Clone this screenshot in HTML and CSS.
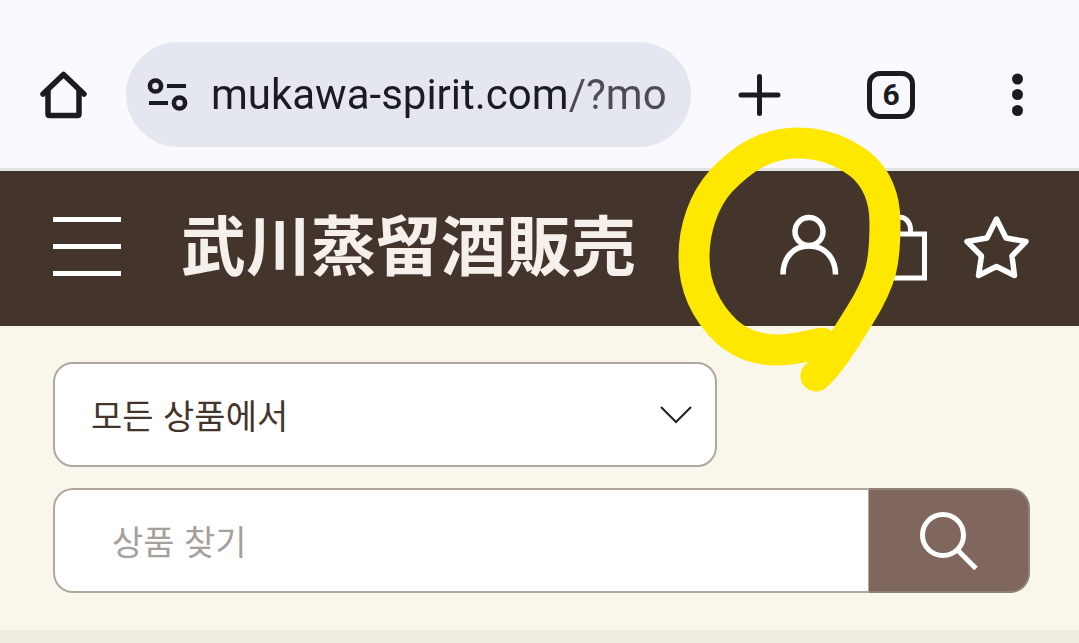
FILE: index.html
```html
<!DOCTYPE html>
<html lang="ko">
<head>
	<meta charset="UTF-8">
	<meta name="viewport" content="width=device-width, initial-scale=1">
	<title>武川蒸留酒販売</title>
	<link rel="stylesheet" href="styles.css">
</head>
<body>
	<div class="toolbar">
		<button class="toolButton" type="button" aria-label="Home">
			<svg width="48" height="48" viewBox="0 0 48 48" fill="none" stroke="#1b1b20" stroke-width="5.500" stroke-linecap="round" stroke-linejoin="round">
				<path d="M3 23 L23.500 3.500 L44 23"/>
				<path d="M8 20 V43 Q8 44.500 9.500 44.500 H37.500 Q39 44.500 39 43 V20"/>
			</svg>
		</button>
		<div class="addressBar">
			<svg width="42" height="36" viewBox="0 0 42 36" fill="none" stroke="#1b1b20" stroke-width="4.500">
				<circle cx="8.500" cy="9" r="5.600"/>
				<path d="M20 9 H39 M2 26 H21" stroke-width="4"/>
				<circle cx="32.500" cy="26" r="5.600"/>
			</svg>
			<input class="url" type="text" aria-label="URL" value="mukawa-spirit.com/?mo">
		</div>
		<div class="toolActions">
			<button class="toolButton" type="button" aria-label="New tab">
				<svg width="48" height="48" viewBox="0 0 48 48" stroke="#1b1b20" stroke-width="5" stroke-linecap="round">
					<path d="M24.500 5.500 V42.500 M6 24 H43"/>
				</svg>
			</button>
			<button class="toolButton tabCount" type="button">6</button>
			<button class="toolButton" type="button" aria-label="Menu">
				<svg width="36" height="48" viewBox="0 0 36 48" fill="#1b1b20">
					<circle cx="18.500" cy="8" r="5.500"/>
					<circle cx="18.500" cy="23.500" r="5.500"/>
					<circle cx="18.500" cy="39.500" r="5.500"/>
				</svg>
			</button>
		</div>
	</div>

	<header class="header">
		<button class="menuButton" type="button" aria-label="메뉴">
			<span class="bar"></span>
			<span class="bar"></span>
			<span class="bar"></span>
		</button>
		<a class="logo" href="#" lang="ja">武川蒸留酒販売</a>
		<nav class="headerIcons">
			<a class="iconLink" href="#" aria-label="마이페이지">
				<svg width="59" height="68" viewBox="0 0 59 68" fill="none" stroke="#fff" stroke-width="5.500">
					<circle cx="29" cy="18.500" r="14"/>
					<path d="M3 61.500 C3 45 13 33 29 33 C45 33 55.500 45 55.500 61.500"/>
				</svg>
				<!-- hand-drawn marker round the account icon -->
				<svg class="marker" width="232" height="272" viewBox="674 123 232 272" fill="none" stroke="#ffe800" stroke-width="31" stroke-linecap="round" stroke-linejoin="round">
					<path d="M822 343 C808 346 794 350 777 350 C757 350 741 344 727 332 C706 312 694 287 694 257 C694 228 704 200 721 181 C742 159 765 143 798 143 C825 143 843 152 860 164 C877 178 885 199 885 223 C885 262 882 280 860 315 C843 342 830 364 816 376"/>
				</svg>
			</a>
			<a class="iconLink" href="#" aria-label="장바구니">
				<svg width="68" height="68" viewBox="0 0 68 68" fill="none" stroke="#fff" stroke-width="5">
					<path d="M9 21 H57.500 V65 H9 Z"/>
					<path d="M22.500 21 V17 C22.500 0 43.500 0 43.500 17 V21"/>
				</svg>
			</a>
			<a class="iconLink" href="#" aria-label="즐겨찾기">
				<svg width="66" height="68" viewBox="0 0 66 68" fill="none" stroke="#fff" stroke-width="5.500" stroke-linejoin="round">
					<path d="M33.500 6 L43 25 L63 28.500 L49 43 L51.500 62.500 L33.500 53.500 L15.500 62.500 L18.500 43 L4 28.500 L24 25 Z"/>
				</svg>
			</a>
		</nav>
	</header>

	<form class="searchForm">
		<div class="selectBox">
			<select class="category" aria-label="카테고리">
				<option>모든 상품에서</option>
			</select>
			<svg class="chevron" width="34" height="18" viewBox="0 0 34 18" fill="none" stroke="#222" stroke-width="2">
				<path d="M2 1 L17 16 L32 1"/>
			</svg>
		</div>
		<div class="searchRow">
			<input class="keyword" type="text" aria-label="상품 찾기" placeholder="상품 찾기">
			<button class="searchButton" type="submit" aria-label="검색">
				<svg width="58" height="58" viewBox="0 0 58 58" fill="none" stroke="#fff" stroke-width="5">
					<circle cx="23" cy="23" r="20.500"/>
					<path d="M37.500 38 L56 56.500"/>
				</svg>
			</button>
		</div>
	</form>
	<main class="content"></main>
</body>
</html>
```

FILE: styles.css
```css
* {
	margin: 0;
	padding: 0;
	box-sizing: border-box;
}

body {
	display: flex;
	flex-direction: column;
	min-height: 100vh;
	background-color: #f9f6ec;
	color: #43342c;
	font-family: "Noto Sans CJK KR", sans-serif;
	font-size: 34px;
}

button {
	border: none;
	background: none;
	cursor: pointer;
}

svg {
	display: block;
}

/* browser toolbar */
.toolbar {
	display: flex;
	align-items: center;
	gap: 38px;
	padding: 42px 44px 21px 40px;
	border-bottom: 3px solid #e2e3e6;
	background-color: #faf9ff;
}

.addressBar {
	flex: 1;
	display: flex;
	align-items: center;
	gap: 22px;
	min-width: 0;
	height: 105px;
	padding: 0 20px 0 21px;
	border-radius: 53px;
	background-color: #e4e7f0;
}

.addressBar svg {
	flex-shrink: 0;
}

/* the path after the host is drawn in a lighter grey */
.url {
	flex: 1;
	min-width: 0;
	height: 64px;
	border: none;
	outline: none;
	color: #1b1b20;
	font-family: Roboto, sans-serif;
	font-size: 42px;
	background: linear-gradient(90deg, #1b1b20 356px, #4b4c57 358px);
	-webkit-background-clip: text;
	background-clip: text;
	-webkit-text-fill-color: transparent;
}

.toolActions {
	display: flex;
	align-items: center;
	gap: 84px;
	padding-left: 6px;
}

.tabCount {
	width: 48px;
	height: 48px;
	border: 5px solid #1b1b20;
	border-radius: 13px;
	color: #1b1b20;
	font-family: Roboto, sans-serif;
	font-size: 30px;
	font-weight: bold;
	line-height: 36px;
}

/* shop header */
.header {
	display: flex;
	align-items: center;
	gap: 60px;
	height: 155px;
	padding: 0 50px 4px 53px;
	background-color: #43342c;
}

.menuButton {
	display: flex;
	flex-direction: column;
	gap: 22px;
	width: 68px;
}

.bar {
	height: 5px;
	background-color: #fff;
}

.logo {
	padding-bottom: 10px;
	color: #f5f0ec;
	font-family: "Noto Sans CJK JP", sans-serif;
	font-size: 65px;
	font-weight: bold;
	line-height: 72px;
	white-space: nowrap;
	text-decoration: none;
}

.headerIcons {
	display: flex;
	gap: 28px;
	margin-left: auto;
}

.iconLink {
	position: relative;
}

.marker {
	position: absolute;
	top: -90px;
	left: -106px;
	z-index: 1;
	pointer-events: none;
}

/* product search */
.searchForm {
	display: flex;
	flex-direction: column;
	gap: 21px;
	padding: 36px 49px 37px 53px;
}

.selectBox {
	position: relative;
	width: 68%;
}

.category {
	width: 100%;
	height: 105px;
	padding: 0 80px 0 36px;
	border: 2px solid #b0a79e;
	border-radius: 20px;
	background-color: #fff;
	color: #43342c;
	font: inherit;
	appearance: none;
}

.chevron {
	position: absolute;
	top: 44px;
	right: 24px;
	pointer-events: none;
}

.searchRow {
	display: flex;
	height: 105px;
}

.keyword {
	flex: 1;
	min-width: 0;
	padding: 0 57px;
	border: 2px solid #b0a79e;
	border-right-width: 1px;
	border-radius: 20px 0 0 20px;
	outline: none;
	background-color: #fff;
	color: #43342c;
	font: inherit;
}

.keyword::placeholder {
	color: #a6a09d;
}

.searchButton {
	display: flex;
	align-items: center;
	justify-content: center;
	width: 161px;
	border: 2px solid #8e8178;
	border-left: none;
	border-radius: 0 20px 20px 0;
	background-color: #80675e;
}

.content {
	flex: 1;
	background-color: #f0ede0;
}
```
